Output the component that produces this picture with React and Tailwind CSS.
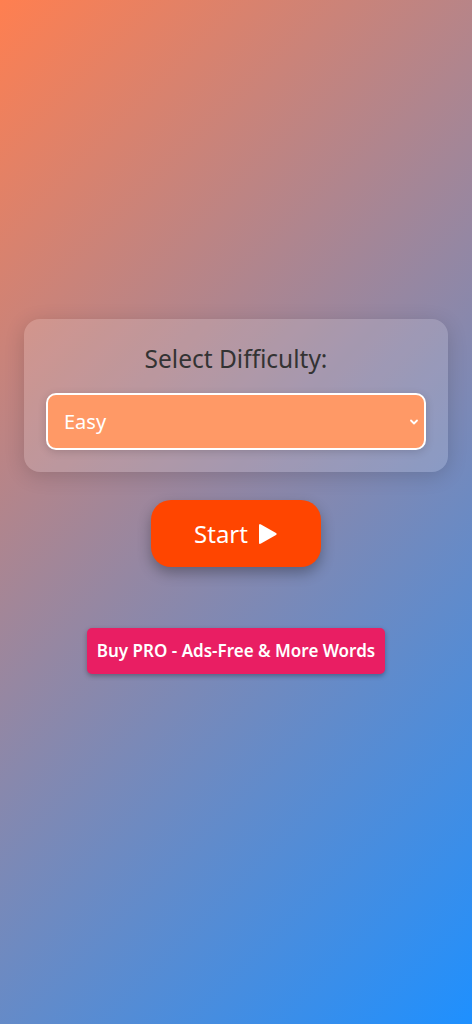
import React, { useState } from 'react';

export default function App() {
  const [level, setLevel] = useState('easy');

  return (
    <div
      className="min-h-screen w-full flex flex-col items-center pt-[319px] bg-[linear-gradient(135deg,#ff7f50,#1e90ff)]"
      style={{ fontFamily: '"Noto Sans", "Open Sans", sans-serif' }}
    >
      {/* Difficulty card */}
      <div className="w-[424px] rounded-2xl bg-white/15 shadow-[0_4px_20px_rgba(0,0,0,0.15)] px-[22px] pt-[22px] pb-[22px] flex flex-col items-center">
        <h2 className="text-[24.5px] leading-[36px] text-[#333] mb-[16px]">Select Difficulty:</h2>
        <div className="relative w-full">
          <select
            value={level}
            onChange={e => setLevel(e.target.value)}
            className="appearance-none w-full h-[57px] rounded-[10px] border-2 border-white bg-[#ff9966] text-white text-[20px] pl-[16px] pr-10 shadow-[0_2px_8px_rgba(0,0,0,0.15)] outline-none"
          >
            <option value="easy">Easy</option>
            <option value="medium">Medium</option>
            <option value="hard">Hard</option>
          </select>
          <svg className="absolute right-[6px] top-1/2 -translate-y-1/2 pointer-events-none" width="12" height="12" viewBox="0 0 12 12">
            <path d="M3 4.5 L6 7.5 L9 4.5" fill="none" stroke="white" strokeWidth="1.8" strokeLinecap="round" strokeLinejoin="round" />
          </svg>
        </div>
      </div>

      {/* Start button */}
      <button className="mt-[28px] w-[170px] h-[67px] rounded-[20px] bg-[#ff4500] text-white text-[24px] flex items-center justify-center gap-[10px] shadow-[0_6px_14px_rgba(0,0,0,0.3)]">
        <span>Start</span>
        <svg width="20" height="24" viewBox="0 0 20 24">
          <path d="M3 2.5 Q1 1.3 1 3.6 L1 20.4 Q1 22.7 3 21.5 L18 13 Q19.6 12 18 11 Z" fill="white" />
        </svg>
      </button>

      {/* Pro button */}
      <button className="mt-[61px] w-[298px] h-[46px] rounded-[5px] bg-[#e91e63] text-white text-[17px] font-semibold shadow-[0_2px_5px_rgba(0,0,0,0.3)]">
        Buy PRO - Ads-Free &amp; More Words
      </button>
    </div>
  );
}
